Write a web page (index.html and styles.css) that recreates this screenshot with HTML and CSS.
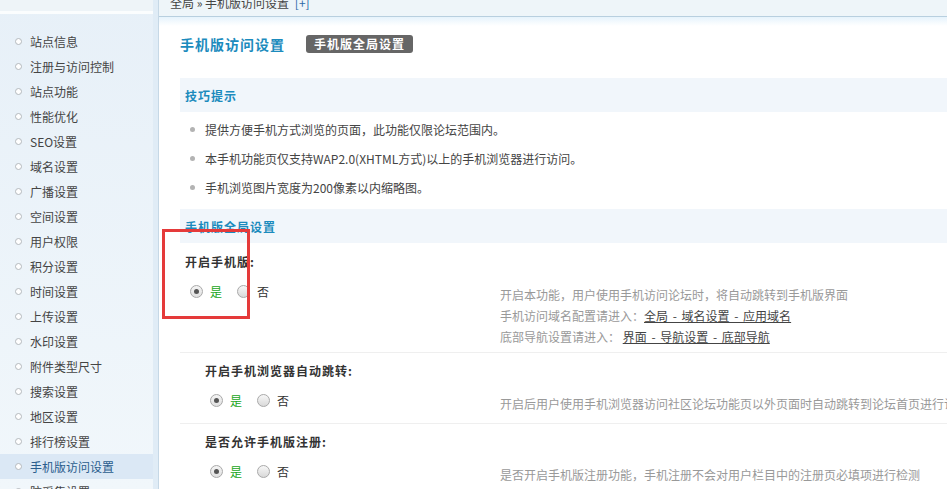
FILE: index.html
```html
<!DOCTYPE html>
<html lang="zh-CN">
<head>
<meta charset="utf-8">
<title>手机版访问设置</title>
<link rel="stylesheet" href="styles.css">
</head>
<body>
<div class="page">
  <aside class="sidebar">
    <div class="side-top"></div>
    <ul class="menu">
      <li>站点信息</li>
      <li>注册与访问控制</li>
      <li>站点功能</li>
      <li>性能优化</li>
      <li>SEO设置</li>
      <li>域名设置</li>
      <li>广播设置</li>
      <li>空间设置</li>
      <li>用户权限</li>
      <li>积分设置</li>
      <li>时间设置</li>
      <li>上传设置</li>
      <li>水印设置</li>
      <li>附件类型尺寸</li>
      <li>搜索设置</li>
      <li>地区设置</li>
      <li>排行榜设置</li>
      <li class="active">手机版访问设置</li>
      <li>防采集设置</li>
    </ul>
  </aside>
  <div class="edge"></div>
  <main class="main">
    <div class="crumb"><span class="crumb-text">全局 » 手机版访问设置 <a class="plus">[+]</a></span></div>
    <div class="content">
      <div class="title-row">
        <h3 class="title">手机版访问设置</h3>
        <span class="badge">手机版全局设置</span>
      </div>
      <div class="box-head">技巧提示</div>
      <ul class="tips">
        <li>提供方便手机方式浏览的页面，此功能仅限论坛范围内。</li>
        <li>本手机功能页仅支持WAP2.0(XHTML方式)以上的手机浏览器进行访问。</li>
        <li>手机浏览图片宽度为200像素以内缩略图。</li>
      </ul>
      <div class="box-head section">手机版全局设置</div>

      <div class="setting first">
        <div class="label">开启手机版:</div>
        <div class="setting-body">
          <div class="choices">
            <span class="opt"><span class="radio checked"></span><span class="yes">是</span></span>
            <span class="opt"><span class="radio"></span><span class="no">否</span></span>
          </div>
          <div class="desc">
            开启本功能，用户使用手机访问论坛时，将自动跳转到手机版界面<br>
            手机访问域名配置请进入：<a class="link">全局 - 域名设置 - 应用域名</a><br>
            底部导航设置请进入： <a class="link">界面 - 导航设置 - 底部导航</a>
          </div>
        </div>
      </div>

      <div class="setting sub">
        <div class="label">开启手机浏览器自动跳转:</div>
        <div class="setting-body">
          <div class="choices">
            <span class="opt"><span class="radio checked"></span><span class="yes">是</span></span>
            <span class="opt"><span class="radio"></span><span class="no">否</span></span>
          </div>
          <div class="desc">开启后用户使用手机浏览器访问社区论坛功能页以外页面时自动跳转到论坛首页进行访问</div>
        </div>
      </div>

      <div class="setting sub">
        <div class="label">是否允许手机版注册:</div>
        <div class="setting-body">
          <div class="choices">
            <span class="opt"><span class="radio checked"></span><span class="yes">是</span></span>
            <span class="opt"><span class="radio"></span><span class="no">否</span></span>
          </div>
          <div class="desc">是否开启手机版注册功能，手机注册不会对用户栏目中的注册页必填项进行检测</div>
        </div>
      </div>
    </div>
  </main>
  <div class="annot"></div>
</div>
</body>
</html>
```

FILE: styles.css
```css
html, body {
  margin: 0;
  padding: 0;
  width: 947px;
  height: 489px;
  overflow: hidden;
  background: #fff;
}

body {
  font-family: "Noto Sans CJK SC", "Noto Sans", sans-serif;
  font-size: 12px;
  color: #333;
}

.page {
  display: flex;
  height: 489px;
  position: relative;
  overflow: hidden;
}

/* ---------- sidebar ---------- */
.sidebar {
  width: 153px;
  flex: none;
  background: linear-gradient(#e7f0f8, #f1f7fb);
}

.side-top {
  height: 11px;
  background: #eef4f8;
  border-bottom: 3px solid #fbfdfe;
}

.menu {
  list-style: none;
  margin: 0;
  padding: 15px 0 0 0;
}

.menu li {
  position: relative;
  height: 25px;
  line-height: 25px;
  padding-left: 30px;
  color: #444;
  white-space: nowrap;
}

.menu li::before {
  content: "";
  position: absolute;
  left: 15px;
  top: 9px;
  width: 5px;
  height: 5px;
  border: 1px solid #b4b9bd;
  border-radius: 50%;
  background: #fff;
}

.menu li.active {
  background: #dbe8f5;
  color: #2a5d8d;
}

.edge {
  width: 5px;
  flex: none;
  background: #e0ecf6;
  border-right: 1px solid #c6d8e6;
}

/* ---------- main ---------- */
.main {
  flex: 1;
  min-width: 0;
}

.crumb {
  height: 16px;
  overflow: hidden;
  background: #eef5f9;
  border-bottom: 1px solid #b8cfdf;
  padding-left: 11px;
  white-space: nowrap;
}

.crumb-text {
  display: block;
  margin-top: -5px;
  line-height: 16px;
  color: #444;
}

.plus {
  color: #2c6aa8;
  margin-left: 3px;
}

.content {
  padding: 15px 0 0 21px;
  background: linear-gradient(#e6f3fc 0, #fff 9px) no-repeat;
  width: 1000px;
}

.title-row {
  display: flex;
  align-items: center;
  gap: 21px;
  height: 24px;
}

.title {
  margin: 0;
  font-size: 14px;
  font-weight: bold;
  letter-spacing: 1px;
  color: #1c8bbd;
}

.badge {
  display: inline-block;
  height: 18px;
  line-height: 18px;
  padding: 0 8px 0 8px;
  background: #666;
  color: #fff;
  font-weight: bold;
  letter-spacing: 1px;
  border-radius: 3px;
}

.box-head {
  margin-top: 22px;
  height: 34px;
  line-height: 35px;
  padding-left: 5px;
  background: #f1f6fb;
  color: #1c8bbd;
  font-weight: bold;
  letter-spacing: 1px;
}

.box-head.section {
  margin-top: 7px;
}

.tips {
  list-style: none;
  margin: 0;
  padding: 3px 0 0 25px;
}

.tips li {
  position: relative;
  line-height: 29px;
  color: #444;
}

.tips li::before {
  content: "";
  position: absolute;
  left: -15px;
  top: 12px;
  width: 5px;
  height: 5px;
  border-radius: 50%;
  background: #b3b3b3;
}

/* ---------- settings ---------- */
.setting {
  border-top: 1px solid #efefef;
}

.setting.first {
  border-top-color: transparent;
}

.label {
  padding: 8px 0 0 5px;
  line-height: 20px;
  font-weight: bold;
  letter-spacing: 1px;
  color: #333;
}

.setting.sub .label {
  padding-left: 25px;
}

.setting-body {
  display: grid;
  grid-template-columns: 320px 1fr;
  margin-top: 8px;
  min-height: 34px;
}

.choices {
  display: flex;
  align-items: flex-start;
  height: 22px;
  padding-left: 10px;
}

.setting.sub .choices {
  padding-left: 30px;
}

.opt {
  display: inline-flex;
  align-items: center;
  height: 22px;
  margin-right: 15px;
}

.radio {
  position: relative;
  display: inline-block;
  width: 11px;
  height: 11px;
  border: 1px solid #a9a9a9;
  border-radius: 50%;
  background: linear-gradient(#f7f7f7, #d9d9d9);
  margin-right: 7px;
  box-sizing: content-box;
}

.radio.checked {
  background: linear-gradient(#f4f4f4, #e0e0e0);
}

.radio.checked::after {
  content: "";
  position: absolute;
  left: 3px;
  top: 3px;
  width: 5px;
  height: 5px;
  border-radius: 50%;
  background: #555;
}

.yes {
  color: #19a619;
}

.no {
  color: #333;
}

.desc {
  padding: 4px 0 5px 0;
  line-height: 21px;
  color: #999;
  white-space: nowrap;
}

.link {
  color: #444;
  text-decoration: underline;
  word-spacing: 2px;
}

/* ---------- annotation overlay ---------- */
.annot {
  position: absolute;
  left: 162px;
  top: 229px;
  width: 82px;
  height: 84px;
  border: 3px solid #e53a3a;
  pointer-events: none;
}
```
